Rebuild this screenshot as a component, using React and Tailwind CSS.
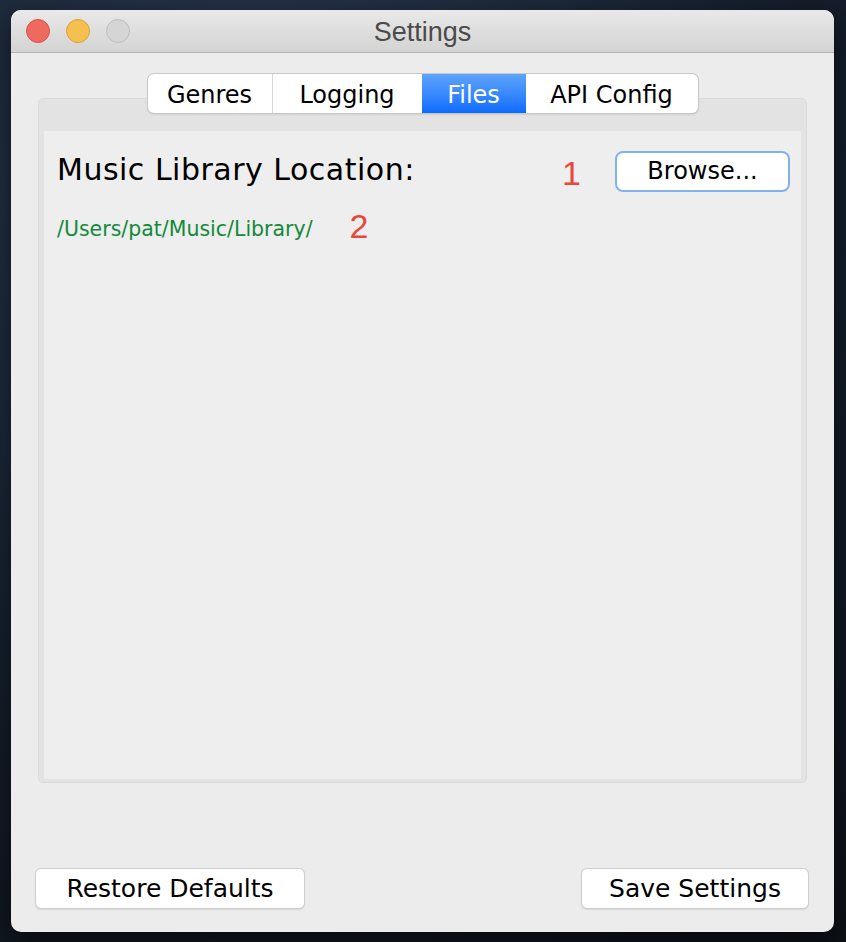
import React from "react";

const tabs = ["Genres", "Logging", "Files", "API Config"];

export default function App() {
  const active = "Files";

  return (
    <div className="w-[846px] h-[942px] overflow-hidden bg-[radial-gradient(circle_at_30%_20%,#2a3a55,#16202e_55%,#0d1218)] pt-[10px] pl-[11px]">
      {/* Window */}
      <div className="w-[823px] h-[922px] rounded-[10px] bg-[#ececec] shadow-[0_10px_30px_rgba(0,0,0,0.6)] overflow-hidden flex flex-col">
        {/* Title bar */}
        <div className="relative h-[43px] shrink-0 bg-gradient-to-b from-[#e9e9e9] to-[#d4d4d4] border-b border-[#b4b4b4] flex items-center justify-center">
          <div className="absolute left-[15px] top-[9px] flex gap-[16px]">
            <span className="w-[24px] h-[24px] rounded-full bg-[#ee6a5f] border border-[#d45349]" />
            <span className="w-[24px] h-[24px] rounded-full bg-[#f5c04f] border border-[#d7a13a]" />
            <span className="w-[24px] h-[24px] rounded-full bg-[#d5d5d5] border border-[#bdbdbd]" />
          </div>
          <span className="text-[27px] text-[#4b4b4b] font-['Liberation_Sans',sans-serif] mt-[3px]">
            Settings
          </span>
        </div>

        {/* Body */}
        <div className="flex-1 px-[27px] pt-[21px] flex flex-col">
          {/* Segmented tabs */}
          <div className="flex justify-center relative z-10">
            <div className="flex h-[39px] rounded-[6px] bg-white shadow-[0_0_0_1px_#c9c9c9,0_1px_2px_rgba(0,0,0,0.25)] overflow-hidden font-['DejaVu_Sans',sans-serif] text-[24px] text-black">
              {tabs.map((t, i) => (
                <div
                  key={t}
                  className={`flex items-center justify-center pt-[2px] ${
                    i === 0 ? "w-[125px]" : i === 1 ? "w-[149px]" : i === 2 ? "w-[104px]" : "w-[172px]"
                  } ${
                    t === active
                      ? "bg-gradient-to-b from-[#5ea3fb] to-[#096bff] text-white"
                      : i === 0
                      ? "border-r border-[#d6d6d6]"
                      : ""
                  }`}
                >
                  {t}
                </div>
              ))}
            </div>
          </div>

          {/* Tab panel */}
          <div className="-mt-[15px] h-[685px] rounded-[5px] bg-[#e3e3e3] border border-[#dadada] pt-[32px] px-[5px] pb-[3px] flex">
            <div className="flex-1 bg-[#eeeeee] pl-[13px] pr-[11px] pt-[19px]">
              <div className="flex items-center">
                <span className="text-[30px] text-black font-['DejaVu_Sans',sans-serif] tracking-[0.5px] -mt-[3px]">
                  Music Library Location:
                </span>
                <span className="ml-auto text-[34px] text-[#e8473b] font-['Liberation_Sans',sans-serif] leading-none mt-[4px]">
                  1
                </span>
                <button className="ml-[34px] w-[175px] h-[41px] rounded-[8px] bg-white border-2 border-[#80b2ec] text-[24px] text-black font-['DejaVu_Sans',sans-serif]">
                  Browse...
                </button>
              </div>
              <div className="flex items-center mt-[16px]">
                <span className="text-[20.5px] text-[#13893a] font-['DejaVu_Sans',sans-serif] mt-[6px]">
                  /Users/pat/Music/Library/
                </span>
                <span className="ml-[37px] text-[34px] text-[#e8473b] font-['Liberation_Sans',sans-serif] leading-none">
                  2
                </span>
              </div>
            </div>
          </div>

          {/* Bottom buttons */}
          <div className="mt-[86px] flex justify-between -ml-[2px] -mr-[1px]">
            <button className="w-[268px] h-[39px] rounded-[5px] bg-white shadow-[0_0_0_1px_#cfcfcf,0_1px_2px_rgba(0,0,0,0.3)] text-[25px] text-black font-['DejaVu_Sans',sans-serif]">
              Restore Defaults
            </button>
            <button className="w-[226px] h-[39px] rounded-[5px] bg-white shadow-[0_0_0_1px_#cfcfcf,0_1px_2px_rgba(0,0,0,0.3)] text-[25px] text-black font-['DejaVu_Sans',sans-serif]">
              Save Settings
            </button>
          </div>
        </div>
      </div>
    </div>
  );
}
